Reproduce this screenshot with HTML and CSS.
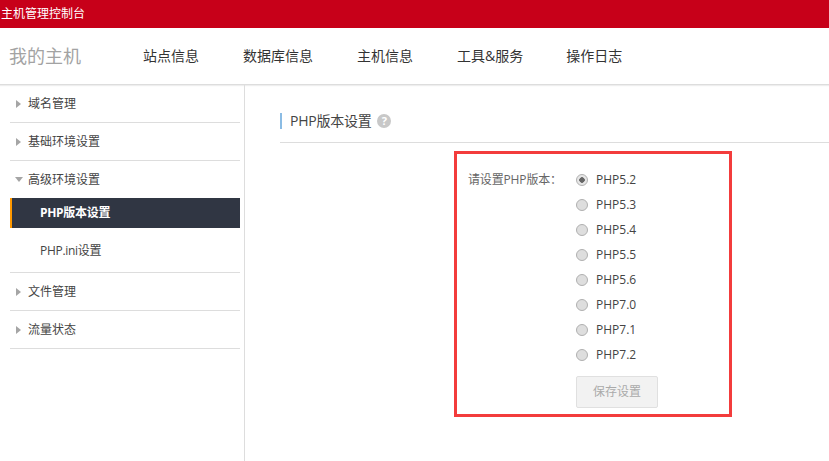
FILE: index.html
```html
<!DOCTYPE html>
<html lang="zh-CN">
<head>
<meta charset="utf-8">
<title>主机管理控制台</title>
<link rel="stylesheet" href="styles.css">
</head>
<body>
<header class="topbar">主机管理控制台</header>
<nav class="nav">
  <div class="logo">我的主机</div>
  <a class="nav-item">站点信息</a>
  <a class="nav-item">数据库信息</a>
  <a class="nav-item">主机信息</a>
  <a class="nav-item tools">工具&amp;服务</a>
  <a class="nav-item">操作日志</a>
</nav>
<div class="body">
  <aside class="sidebar">
    <section class="group"><div class="group-title"><i class="tri"></i>域名管理</div></section>
    <section class="group"><div class="group-title"><i class="tri"></i>基础环境设置</div></section>
    <section class="group open">
      <div class="group-title"><i class="tri down"></i>高级环境设置</div>
      <div class="sub active">PHP版本设置</div>
      <div class="sub">PHP.ini设置</div>
    </section>
    <section class="group"><div class="group-title"><i class="tri"></i>文件管理</div></section>
    <section class="group"><div class="group-title"><i class="tri"></i>流量状态</div></section>
  </aside>
  <main class="main">
    <div class="head">
      <h2 class="title">PHP版本设置</h2>
      <span class="help">?</span>
    </div>
    <form class="form">
      <div class="label">请设置PHP版本：</div>
      <div class="options">
        <div class="opt"><span class="radio on"></span>PHP5.2</div>
        <div class="opt"><span class="radio"></span>PHP5.3</div>
        <div class="opt"><span class="radio"></span>PHP5.4</div>
        <div class="opt"><span class="radio"></span>PHP5.5</div>
        <div class="opt"><span class="radio"></span>PHP5.6</div>
        <div class="opt"><span class="radio"></span>PHP7.0</div>
        <div class="opt"><span class="radio"></span>PHP7.1</div>
        <div class="opt"><span class="radio"></span>PHP7.2</div>
        <div class="save">保存设置</div>
      </div>
    </form>
  </main>
</div>
</body>
</html>
```
FILE: styles.css
```css
* { box-sizing: border-box; }
html, body { margin: 0; height: 100%; overflow: hidden; }
body {
  background: #fff;
  color: #333;
  font-family: "Open Sans", "Noto Sans CJK SC", sans-serif;
  font-size: 12px;
  display: flex;
  flex-direction: column;
}
.topbar {
  height: 28px;
  flex: none;
  background: #c70019;
  color: #fff;
  line-height: 27px;
  padding-left: 1px;
}
.nav {
  height: 57px;
  flex: none;
  display: flex;
  align-items: center;
  border-bottom: 1px solid #ddd;
  box-shadow: 0 1px 1px #eee;
  padding: 0 0 2px 9px;
  font-size: 14px;
  color: #333;
}
.logo { width: 134px; font-size: 18px; color: #a3a3a3; }
.nav-item { margin-right: 44px; }
.nav-item.tools { margin-right: 43px; }
.body { flex: 1; display: flex; min-height: 0; }
.sidebar {
  width: 245px;
  flex: none;
  border-right: 1px solid #ddd;
  padding: 0 4px 0 10px;
}
.group { border-bottom: 1px solid #ddd; }
.group.open { padding-bottom: 8px; }
.group-title {
  height: 37px;
  line-height: 37px;
  display: flex;
  align-items: center;
  padding-left: 6px;
  color: #444;
}
.tri {
  width: 0;
  height: 0;
  border-style: solid;
  border-width: 4px 0 4px 5px;
  border-color: transparent transparent transparent #a5a5a5;
  margin-right: 7px;
}
.tri.down {
  border-width: 5px 4px 0 4px;
  border-color: #a5a5a5 transparent transparent transparent;
  margin-left: -1px;
  margin-right: 5px;
}
.sub {
  height: 28px;
  line-height: 29px;
  padding-left: 30px;
  color: #444;
  letter-spacing: -0.3px;
}
.sub.active {
  height: 30px;
  margin-bottom: 8px;
  background: #303643;
  color: #fff;
  font-weight: 700;
  border-left: 2px solid #f90;
  padding-left: 28px;
}
.main { flex: 1; padding-left: 35px; min-width: 0; }
.head {
  height: 58px;
  border-bottom: 1px solid #ddd;
  display: flex;
  align-items: center;
  padding-top: 15px;
}
.title {
  margin: 0;
  font-size: 14px;
  font-weight: 400;
  letter-spacing: -0.25px;
  color: #444;
  height: 16px;
  line-height: 16px;
  border-left: 2px solid #8bbce4;
  padding-left: 8px;
}
.help {
  width: 14px;
  height: 14px;
  margin-left: 6px;
  border-radius: 50%;
  background: #c8c8c8;
  color: #fff;
  font-size: 11px;
  font-weight: 700;
  line-height: 14px;
  text-align: center;
}
.form {
  width: 278px;
  height: 266px;
  margin: 8px 0 0 174px;
  border: 3px solid #f33c3c;
  display: flex;
  padding: 13px 0 0 11px;
}
.label { width: 108px; color: #666; line-height: 25px; letter-spacing: -0.15px; }
.options { display: flex; flex-direction: column; align-items: flex-start; }
.opt {
  height: 25px;
  display: flex;
  align-items: center;
  color: #444;
}
.radio {
  width: 12px;
  height: 12px;
  margin-right: 8px;
  border-radius: 50%;
  border: 1px solid #b0b0b0;
  background: #dedede;
}
.radio.on { background: radial-gradient(circle, #666 0 2.5px, #e6e6e6 3px); }
.save {
  margin-top: 9px;
  width: 82px;
  height: 32px;
  line-height: 30px;
  text-align: center;
  border: 1px solid #e0e0e0;
  border-radius: 2px;
  background: #f2f2f2;
  color: #aaa;
}
```
